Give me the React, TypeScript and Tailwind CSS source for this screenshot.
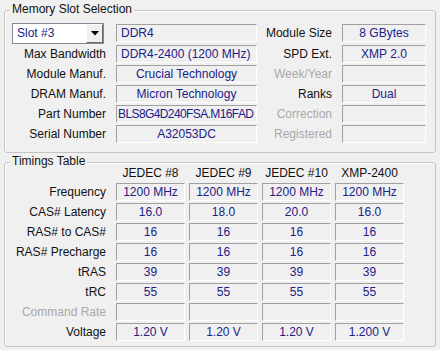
import React from 'react';

const font = { fontFamily: '"Liberation Sans", Arial, sans-serif' };

function Field({
  value = '',
  w,
  align = 'center',
  tight,
}: {
  value?: string;
  w: string;
  align?: 'center' | 'left';
  tight?: boolean;
}) {
  return (
    <div
      className={`${w} h-[18px] flex items-center border border-t-[#a0a0a0] border-l-[#a0a0a0] border-b-white border-r-white bg-[#f0f0f0] text-[#202088] whitespace-nowrap overflow-hidden ${
        align === 'center' ? 'justify-center' : tight ? 'justify-start pl-[1px] tracking-[-0.6px]' : 'justify-start pl-[4px]'
      }`}
    >
      {value}
    </div>
  );
}

function Label({ text, w, muted }: { text: string; w: string; muted?: boolean }) {
  return (
    <div className={`${w} text-right whitespace-nowrap ${muted ? 'text-[#a8a8a8]' : 'text-[#111]'}`}>{text}</div>
  );
}

function Group({ title, className, children }: { title: string; className: string; children: React.ReactNode }) {
  return (
    <div
      className={`relative mx-[4px] border border-[#c4c4c4] rounded-[3px] shadow-[inset_1px_1px_0_#ffffff] ${className}`}
    >
      <span className="absolute left-[5px] top-[-9px] px-[2px] bg-[#f0f0f0] text-[#111] leading-[15px]">{title}</span>
      {children}
    </div>
  );
}

const slotRows = [
  { l: 'Max Bandwidth', v: 'DDR4-2400 (1200 MHz)', a: 'left', rl: 'SPD Ext.', rv: 'XMP 2.0' },
  { l: 'Module Manuf.', v: 'Crucial Technology', a: 'center', rl: 'Week/Year', rv: '', rm: true },
  { l: 'DRAM Manuf.', v: 'Micron Technology', a: 'center', rl: 'Ranks', rv: 'Dual' },
  { l: 'Part Number', v: 'BLS8G4D240FSA.M16FAD', a: 'left', rl: 'Correction', rv: '', rm: true, t: true },
  { l: 'Serial Number', v: 'A32053DC', a: 'center', rl: 'Registered', rv: '', rm: true },
] as const;

const timings: { l: string; v: string[]; muted?: boolean }[] = [
  { l: 'Frequency', v: ['1200 MHz', '1200 MHz', '1200 MHz', '1200 MHz'] },
  { l: 'CAS# Latency', v: ['16.0', '18.0', '20.0', '16.0'] },
  { l: 'RAS# to CAS#', v: ['16', '16', '16', '16'] },
  { l: 'RAS# Precharge', v: ['16', '16', '16', '16'] },
  { l: 'tRAS', v: ['39', '39', '39', '39'] },
  { l: 'tRC', v: ['55', '55', '55', '55'] },
  { l: 'Command Rate', v: ['', '', '', ''], muted: true },
  { l: 'Voltage', v: ['1.20 V', '1.20 V', '1.20 V', '1.200 V'] },
];

const heads = ['JEDEC #8', 'JEDEC #9', 'JEDEC #10', 'XMP-2400'];

export default function App() {
  return (
    <div className="w-[440px] h-[350px] bg-[#f0f0f0] text-[12px] leading-none overflow-hidden pt-[10px]" style={font}>
      <Group title="Memory Slot Selection" className="h-[143px] pt-[11px]">
        <div className="flex items-center h-[22px]">
          <div className="ml-[7px] w-[92px] h-[21px] flex bg-white border border-[#7f8a99]">
            <div className="flex-1 flex items-center pl-[4px] text-[#202088]">Slot #3</div>
            <div className="w-[17px] h-full flex items-center justify-center bg-[#f0f0f0] border border-t-white border-l-white border-b-[#6a6a6a] border-r-[#6a6a6a]">
              <svg width="8" height="5" viewBox="0 0 8 5">
                <path d="M0 0h8L4 4.5z" fill="#000" />
              </svg>
            </div>
          </div>
          <div className="ml-[12px]">
            <Field value="DDR4" w="w-[141px]" align="left" />
          </div>
          <Label text="Module Size" w="w-[75px]" />
          <div className="ml-[10px]">
            <Field value="8 GBytes" w="w-[84px]" />
          </div>
        </div>
        {slotRows.map((r) => (
          <div key={r.l} className="flex items-center h-[20px]">
            <Label text={r.l} w="w-[101px]" />
            <div className="ml-[10px]">
              <Field value={r.v} w="w-[141px]" align={r.a} tight={'t' in r} />
            </div>
            <Label text={r.rl} w="w-[75px]" muted={'rm' in r && r.rm} />
            <div className="ml-[10px]">
              <Field value={r.rv} w="w-[84px]" />
            </div>
          </div>
        ))}
      </Group>

      <Group title="Timings Table" className="mt-[9px] h-[185px] pt-[1px]">
        <div className="flex items-center h-[18px]">
          <div className="w-[111px]" />
          <div className="flex gap-[4px]">
            {heads.map((h) => (
              <div key={h} className="w-[69px] text-center text-[#111] whitespace-nowrap">
                {h}
              </div>
            ))}
          </div>
        </div>
        {timings.map((t) => (
          <div key={t.l} className="flex items-center h-[20px]">
            <Label text={t.l} w="w-[101px]" muted={t.muted} />
            <div className="ml-[10px] flex gap-[4px]">
              {t.v.map((v, i) => (
                <Field key={i} value={v} w="w-[69px]" />
              ))}
            </div>
          </div>
        ))}
      </Group>
    </div>
  );
}
